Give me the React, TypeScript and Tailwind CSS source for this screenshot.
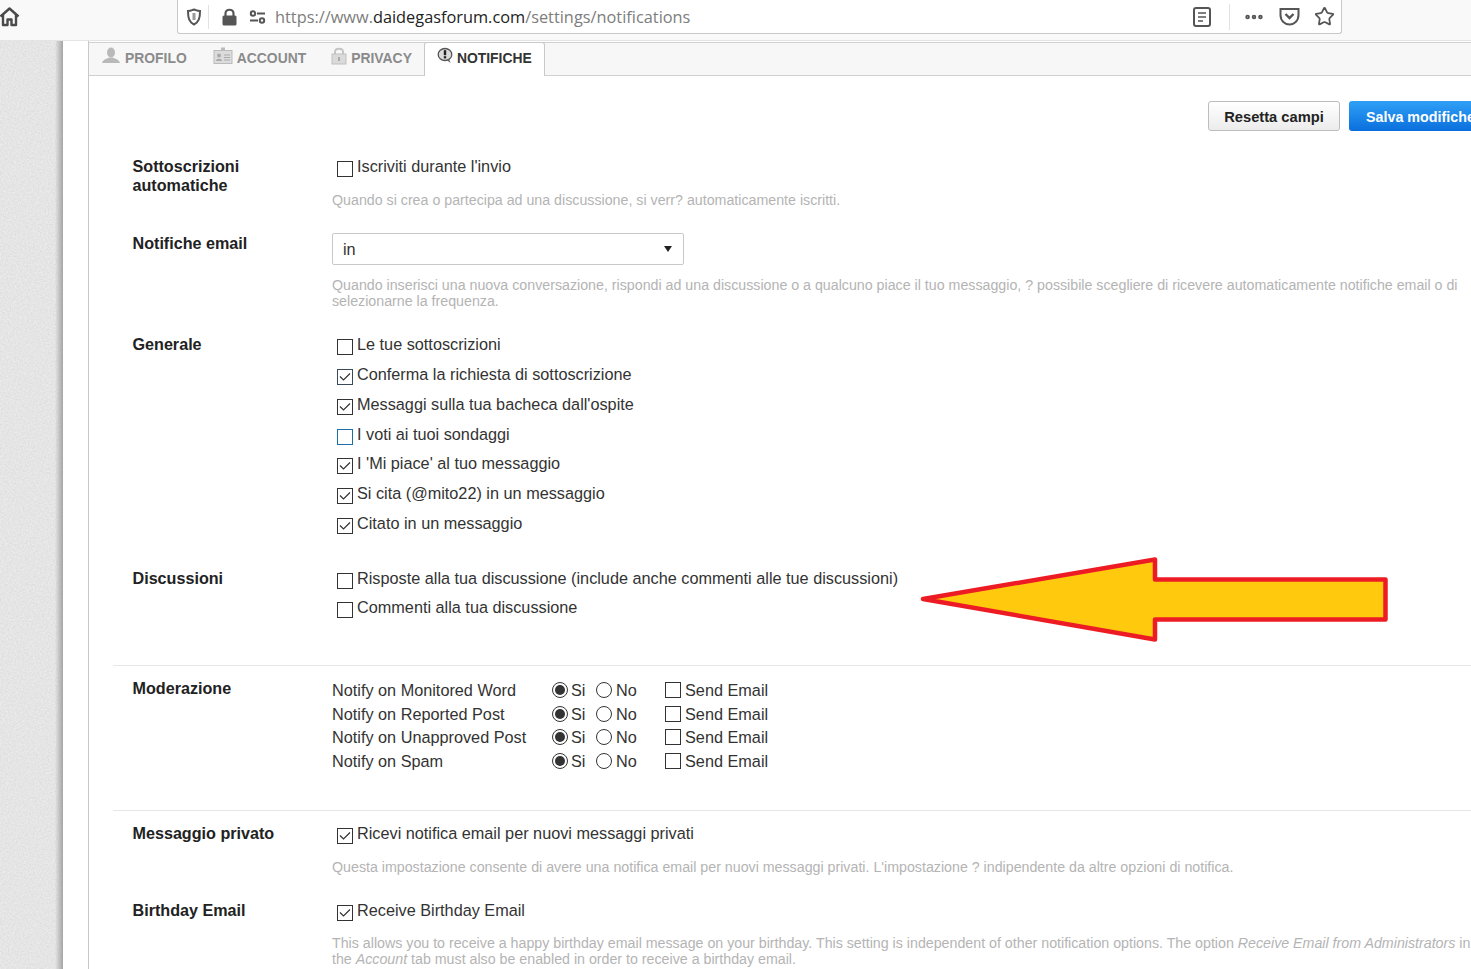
import { MoreHorizontal, Star } from "lucide-react";

// ===== Types =====
type CheckProps = {
  checked?: boolean;
  tone?: "default" | "blue" | "focus";
};

// ===== Small controls =====
function Check({ checked = false, tone = "default" }: CheckProps) {
  const border = tone === "blue" ? "border-[#1b6fa8]" : tone === "focus" ? "border-[#3a4a5a]" : "border-[#333]";
  return (
    <span className={`flex h-4 w-4 shrink-0 items-center justify-center border bg-white ${border}`}>
      {checked && (
        <svg width="12" height="10" viewBox="0 0 12 10" fill="none" stroke="#333" strokeWidth="1.2">
          <path d="M1 4.5 L4.5 8 L11 1.5" />
        </svg>
      )}
    </span>
  );
}

function Radio({ selected = false }: { selected?: boolean }) {
  return (
    <span className="flex h-4 w-4 shrink-0 items-center justify-center rounded-full border border-[#333] bg-white">
      {selected && <span className="h-[10px] w-[10px] rounded-full bg-[#333]" />}
    </span>
  );
}

function CheckRow({ label, checked, tone, className = "h-[30px]" }: CheckProps & { label: string; className?: string }) {
  return (
    <div className={`flex items-center pl-[5px] ${className}`}>
      <span className="relative top-[2px]">
        <Check checked={checked} tone={tone} />
      </span>
      <span className="relative -top-px ml-[4px]">{label}</span>
    </div>
  );
}

function Section({ title, className = "", titleClass = "", children }: { title: React.ReactNode; className?: string; titleClass?: string; children: React.ReactNode }) {
  return (
    <section className={`flex pl-px ${className}`}>
      <h3 className={`w-[218px] shrink-0 pl-[18.5px] text-[16.15px] leading-[19px] font-bold text-[#222] ${titleClass}`}>{title}</h3>
      <div className="min-w-0 flex-1">{children}</div>
    </section>
  );
}

function Hint({ children, className = "" }: { children: React.ReactNode; className?: string }) {
  return <p className={`w-[1142px] text-[14.23px] leading-[16px] text-[#b4b4b4] ${className}`}>{children}</p>;
}

function ModRow({ label }: { label: string }) {
  return (
    <div className="flex h-[23.7px] items-center">
      <span className="w-[220px] shrink-0">{label}</span>
      <Radio selected />
      <span className="ml-[3px] w-[25px]">Si</span>
      <Radio />
      <span className="ml-[4px] w-[49px]">No</span>
      <Check />
      <span className="ml-[4px]">Send Email</span>
    </div>
  );
}

// ===== Tab icons =====
function UserIcon() {
  return (
    <svg width="20" height="18" viewBox="0 0 20 18" fill="#b9b9b9">
      <ellipse cx="10" cy="5.5" rx="4" ry="5" />
      <path d="M1 16 C2 12 6 12 8 10.5 H12 C14 12 18 12 19 16 Z" />
    </svg>
  );
}

function CardIcon() {
  return (
    <svg width="20" height="18" viewBox="0 0 20 18">
      <rect x="8" y="0.5" width="4" height="4" fill="#bbb" />
      <rect x="1" y="3.5" width="18" height="13" fill="#dcdcdc" stroke="#bbb" />
      <circle cx="6" cy="8.5" r="2" fill="#aaa" />
      <path d="M3 14 C3 11 9 11 9 14 Z" fill="#aaa" />
      <path d="M11 8 H17 M11 10.5 H17 M11 13 H17" stroke="#aaa" />
    </svg>
  );
}

function LockIcon() {
  return (
    <svg width="16" height="18" viewBox="0 0 16 18">
      <path d="M4 8 V5 C4 0.5 12 0.5 12 5 V8" fill="none" stroke="#c4c4c4" strokeWidth="2" />
      <rect x="1" y="7" width="14" height="10" fill="#dadada" stroke="#c0c0c0" />
      <rect x="7" y="10" width="2" height="4" fill="#aaa" />
    </svg>
  );
}

function BubbleIcon() {
  return (
    <svg width="16" height="17" viewBox="0 0 16 17">
      <ellipse cx="8" cy="7.5" rx="6.8" ry="6" fill="#dcdcdc" stroke="#555" strokeWidth="1.3" />
      <path d="M9.5 13 L13.5 16 L12 11.5 Z" fill="#666" />
      <rect x="6.8" y="3.2" width="2.4" height="5" fill="#222" />
      <rect x="6.8" y="9.2" width="2.4" height="2.2" fill="#222" />
    </svg>
  );
}

function Tab({ icon, label, className }: { icon: React.ReactNode; label: string; className: string }) {
  return (
    <div className={`flex items-start font-bold ${className}`}>
      {icon}
      <span className="mt-[3px] ml-[4px] text-[13.9px] leading-[16px]">{label}</span>
    </div>
  );
}

// ===== Browser bar =====
function BrowserBar() {
  return (
    <header className="flex h-[41px] shrink-0 items-start border-b border-[#e4e4e4] bg-[#f9f9fa]">
      <div className="flex h-[33px] w-[177px] shrink-0 items-center overflow-hidden">
        <svg className="-ml-px" width="21" height="21" viewBox="0 0 21 21" fill="none" stroke="#4a4a4a" strokeWidth="2.4" strokeLinejoin="round">
          <path d="M1.5 10.5 L10.5 2.5 L19.5 10.5" />
          <path d="M4 8.5 V19 H8.5 V13.5 H12.5 V19 H17 V8.5" />
        </svg>
      </div>
      <div className="flex h-[34px] w-[1165px] shrink-0 items-center rounded-b-[3px] border-x border-b border-[#c8c8c8] bg-white">
        <svg className="ml-[8px]" width="16" height="18" viewBox="0 0 16 18" fill="none" stroke="#555" strokeWidth="2">
          <path d="M2 3 C5 3 6 2 8 1.5 C10 2 11 3 14 3 C14 10 13 14 8 16.5 C3 14 2 10 2 3 Z" />
          <path d="M8 5 V12" strokeWidth="3" stroke="#999" />
        </svg>
        <span className="ml-[6px] h-[24px] w-px bg-[#e2e2e2]" />
        <svg className="ml-[13px]" width="15" height="18" viewBox="0 0 15 18" fill="#555">
          <path d="M3.5 8 V5.5 C3.5 0.5 11.5 0.5 11.5 5.5 V8" fill="none" stroke="#555" strokeWidth="2.2" />
          <rect x="0.5" y="7.5" width="14" height="10" rx="1.5" />
        </svg>
        <svg className="ml-[12px]" width="17" height="14" viewBox="0 0 17 14" fill="none" stroke="#555" strokeWidth="2">
          <circle cx="4" cy="3.5" r="2.2" />
          <path d="M8 3.5 H16 M1 10.5 H9" />
          <circle cx="13" cy="10.5" r="2.2" />
        </svg>
        <span className="relative top-px ml-[9px] font-['Open_Sans',sans-serif] text-[16.33px] text-[#7d7d7d]">
          https://www.<span className="text-[#222]">daidegasforum.com</span>/settings/notifications
        </span>
        <div className="ml-auto flex items-center">
          <svg width="18" height="20" viewBox="0 0 18 20" fill="none" stroke="#555" strokeWidth="2">
            <rect x="1" y="1" width="16" height="18" rx="2" />
            <path d="M5 6 H13 M5 10 H13 M5 14 H10" strokeWidth="1.5" />
          </svg>
          <span className="ml-[18px] h-[26px] w-px bg-[#e2e2e2]" />
          <MoreHorizontal className="ml-[13px]" size={22} stroke="#555" strokeWidth={3} />
          <svg className="ml-[14px]" width="21" height="19" viewBox="0 0 21 19" fill="none" stroke="#555" strokeWidth="2">
            <path d="M1.5 2 H19.5 V8 C19.5 14 15 17.5 10.5 17.5 C6 17.5 1.5 14 1.5 8 Z" />
            <path d="M6.5 7 L10.5 11 L14.5 7" strokeWidth="2.4" />
          </svg>
          <Star className="mr-[6px] ml-[14px]" size={21} stroke="#555" strokeWidth={2} />
        </div>
      </div>
    </header>
  );
}

// ===== Page =====
export default function App() {
  return (
    <div className="relative flex h-[969px] w-[1471px] flex-col overflow-hidden bg-white font-['Liberation_Sans',Arial,sans-serif] text-[16.25px] text-[#333]">
      <BrowserBar />

      <div className="flex min-h-0 flex-1">
        {/* Textured page background */}
        <div className="relative w-[63px] shrink-0 bg-[#ececec]">
          <svg className="h-full w-full" aria-hidden="true">
            <filter id="grain">
              <feTurbulence type="fractalNoise" baseFrequency="0.6" numOctaves="3" />
              <feColorMatrix values="0 0 0 0 0.55  0 0 0 0 0.55  0 0 0 0 0.55  0.6 0 0 0 -0.12" />
            </filter>
            <rect width="100%" height="100%" filter="url(#grain)" />
          </svg>
          <div className="absolute inset-y-0 right-0 w-[8px] bg-gradient-to-r from-transparent to-[#a5a5a5]" />
        </div>

        <div className="w-[25px] shrink-0" />

        <main className="min-w-0 flex-1 border-l border-[#c9c9c9]">
          {/* Tabs */}
          <nav className="mt-px flex h-[34px] border-y border-[#d0d0d0] bg-[#f7f7f8]">
            <Tab icon={<UserIcon />} label="PROFILO" className="pt-[4px] pl-[12px] text-[#8b8b8b]" />
            <Tab icon={<CardIcon />} label="ACCOUNT" className="pt-[4px] pl-[26px] text-[#8b8b8b]" />
            <Tab icon={<LockIcon />} label="PRIVACY" className="pt-[4px] pl-[25px] text-[#8b8b8b]" />
            <div className="ml-[12px] -mt-px -mb-px h-[34px] rounded-t-[3px] border-x border-t border-[#c9c9c9] bg-white">
              <Tab icon={<BubbleIcon />} label="NOTIFICHE" className="pt-[4px] pr-[12px] pl-[12px] text-[#333]" />
            </div>
          </nav>

          {/* Actions */}
          <div className="mt-[25px] flex h-[30px] pl-[1119px] font-bold">
            <button className="h-[30px] w-[132px] shrink-0 rounded-[3px] border border-[#bdbdbd] bg-gradient-to-b from-white to-[#ececec] pt-[2px] text-[14.7px] text-[#222]">
              Resetta campi
            </button>
            <button className="ml-[9px] h-[30px] w-[122px] shrink-0 overflow-hidden rounded-l-[3px] bg-gradient-to-b from-[#2fa0f6] to-[#0a6fdd] pt-[3px] pl-[17px] text-left text-[14.3px] whitespace-nowrap text-white">
              Salva modifiche
            </button>
          </div>

          <div className="mt-[26px] pl-[24px]">
            <Section title={<>Sottoscrizioni<br />automatiche</>}>
              <CheckRow label="Iscriviti durante l'invio" className="h-[20px]" />
              <Hint className="mt-[15px]">Quando si crea o partecipa ad una discussione, si verr? automaticamente iscritti.</Hint>
            </Section>

            <Section title="Notifiche email" className="mt-[25px]" titleClass="pt-px">
              <div className="flex h-[32px] w-[352px] items-center rounded-[2px] border border-[#c9c9c9] bg-white pr-[11px] pl-[10px]">
                <span>in</span>
                <span className="ml-auto h-0 w-0 border-x-[4px] border-t-[6px] border-x-transparent border-t-[#222]" />
              </div>
              <Hint className="mt-[12px]">
                Quando inserisci una nuova conversazione, rispondi ad una discussione o a qualcuno piace il tuo messaggio, ? possibile scegliere di ricevere automaticamente notifiche email o di selezionarne la frequenza.
              </Hint>
            </Section>

            <Section title="Generale" className="mt-[26px]">
              <div className="-mt-[5px]">
                <CheckRow label="Le tue sottoscrizioni" />
                <CheckRow label="Conferma la richiesta di sottoscrizione" checked tone="focus" />
                <CheckRow label="Messaggi sulla tua bacheca dall'ospite" checked />
                <CheckRow label="I voti ai tuoi sondaggi" tone="blue" className="h-[29.6px]" />
                <CheckRow label="I 'Mi piace' al tuo messaggio" checked className="h-[29.6px]" />
                <CheckRow label="Si cita (@mito22) in un messaggio" checked />
                <CheckRow label="Citato in un messaggio" checked />
              </div>
            </Section>

            <Section title="Discussioni" className="mt-[30px]">
              <div className="-mt-[5px]">
                <CheckRow label="Risposte alla tua discussione (include anche commenti alle tue discussioni)" className="h-[29px]" />
                <CheckRow label="Commenti alla tua discussione" className="h-[29px]" />
              </div>
            </Section>

            <hr className="mt-[43px] border-[#e6e6e6]" />

            <Section title="Moderazione" className="mt-[13px]">
              <div className="-mt-px">
                <ModRow label="Notify on Monitored Word" />
                <ModRow label="Notify on Reported Post" />
                <ModRow label="Notify on Unapproved Post" />
                <ModRow label="Notify on Spam" />
              </div>
            </Section>

            <hr className="mt-[37px] border-[#e6e6e6]" />

            <Section title="Messaggio privato" className="mt-[13px]">
              <CheckRow label="Ricevi notifica email per nuovi messaggi privati" checked className="h-[20px]" />
              <Hint className="mt-[15px]">
                Questa impostazione consente di avere una notifica email per nuovi messaggi privati. L'impostazione ? indipendente da altre opzioni di notifica.
              </Hint>
            </Section>

            <Section title="Birthday Email" className="mt-[26px]">
              <CheckRow label="Receive Birthday Email" checked className="h-[20px]" />
              <Hint className="mt-[14px]">
                This allows you to receive a happy birthday email message on your birthday. This setting is independent of other notification options. The option <em>Receive Email from Administrators</em> in the <em>Account</em> tab must also be enabled in order to receive a birthday email.
              </Hint>
            </Section>
          </div>
        </main>
      </div>

      {/* Annotation arrow pasted over the screenshot */}
      <svg className="absolute top-[555px] left-[918px]" width="472" height="90" viewBox="918 555 472 90">
        <polygon
          points="923,599 1155,559.5 1155,579.5 1385.5,579.5 1385.5,619.5 1155,619.5 1155,639.5"
          fill="#ffc90e"
          stroke="#ed1c24"
          strokeWidth="4.5"
          strokeLinejoin="round"
        />
      </svg>
    </div>
  );
}
